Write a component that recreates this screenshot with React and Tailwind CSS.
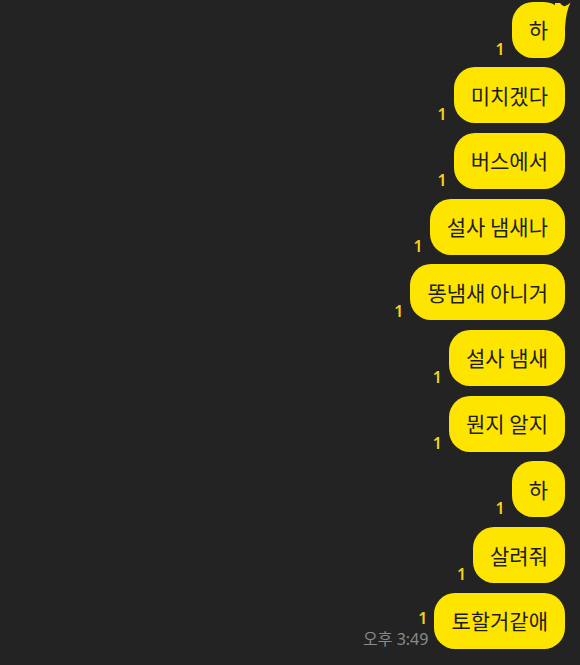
import React from "react";

const msgs = [
  { t: "하", tail: true },
  { t: "미치겠다" },
  { t: "버스에서" },
  { t: "설사 냄새나" },
  { t: "똥냄새 아니거" },
  { t: "설사 냄새" },
  { t: "뭔지 알지" },
  { t: "하" },
  { t: "살려줘" },
  { t: "토할거같애", time: "오후 3:49" },
];

function Tail() {
  return (
    <svg
      className="absolute top-0 left-full -ml-[10px]"
      width="16"
      height="26"
      viewBox="0 0 16 26"
    >
      <path
        d="M0 1 L5 1 Q8 5 10 4 Q13 3 15.5 0.5 Q11 9 10 26 L0 26 Z"
        fill="#fee500"
      />
    </svg>
  );
}

export default function App() {
  return (
    <div
      className="w-[580px] h-[665px] bg-[#232323] overflow-hidden flex flex-col items-end gap-[9.7px] pt-[1.5px] pr-[15px]"
      style={{ fontFamily: '"Noto Sans", "Noto Sans CJK KR", sans-serif' }}
    >
      {msgs.map((m, i) => (
        <div key={i} className="flex items-end gap-[7px]">
          <div className="flex flex-col items-end mb-[1px]">
            <span className="text-[16px] leading-none font-semibold text-[#f2d21b]">
              1
            </span>
            {m.time && (
              <span className="text-[16px] leading-none text-[#8a8a8a] mt-[5px] mb-[1px] -mr-[1px]">
                {m.time}
              </span>
            )}
          </div>
          <div className="relative h-[56px] px-[17px] rounded-[21px] bg-[#fee500] flex items-center">
            <span
              className="text-[21px] text-[#1d1d1d] leading-none whitespace-nowrap"
              style={{ fontFamily: '"Noto Sans CJK KR", sans-serif' }}
            >
              {m.t}
            </span>
            {m.tail && <Tail />}
          </div>
        </div>
      ))}
    </div>
  );
}
